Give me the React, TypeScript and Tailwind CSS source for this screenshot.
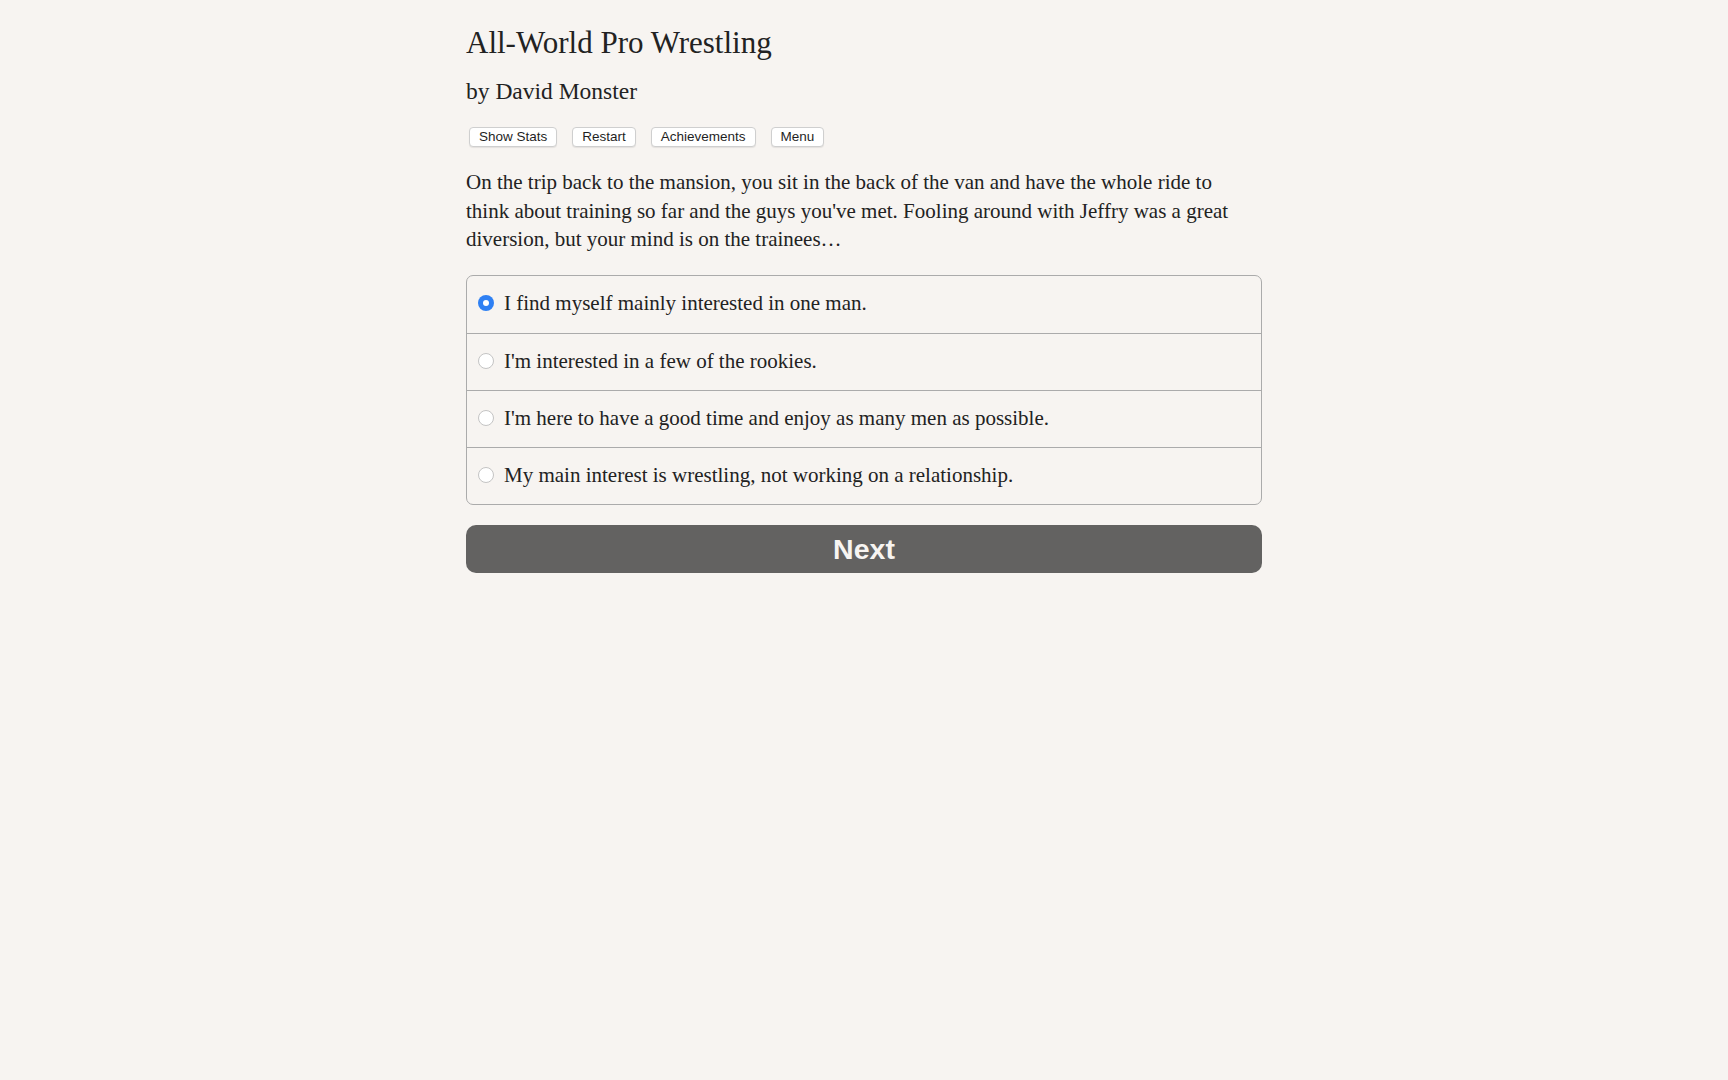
import { useState } from 'react';

const options = [
  'I find myself mainly interested in one man.',
  "I'm interested in a few of the rookies.",
  "I'm here to have a good time and enjoy as many men as possible.",
  'My main interest is wrestling, not working on a relationship.',
];

const navButtons = ['Show Stats', 'Restart', 'Achievements', 'Menu'];

export default function App() {
  const [selected, setSelected] = useState(0);

  return (
    <div className="min-h-screen bg-[#f7f4f1] text-[#222222] font-['Liberation_Serif',serif]">
      <main className="mx-auto w-[796px] pt-[25px]">
        <h1 className="text-[31px] leading-[36px] font-normal">All-World Pro Wrestling</h1>
        <h2 className="mt-[15px] text-[23.5px] leading-[30px] font-normal">by David Monster</h2>

        {/* top bar */}
        <div className="mt-[21px] flex gap-[15px] pl-[3px] font-['Liberation_Sans',sans-serif]">
          {navButtons.map((b) => (
            <button
              key={b}
              className="rounded-[4px] border border-[#cfcfcf] bg-white px-[9px] text-[13.5px] leading-[18px] text-[#1f1f1f] shadow-[0_1px_1px_rgba(0,0,0,0.08)]"
            >
              {b}
            </button>
          ))}
        </div>

        <p className="mt-[21px] text-[21px] leading-[28.7px]">
          On the trip back to the mansion, you sit in the back of the van and have the whole ride to
          <br />
          think about training so far and the guys you've met. Fooling around with Jeffry was a great
          <br />
          diversion, but your mind is on the trainees…
        </p>

        {/* choices */}
        <div className="mt-[21px] overflow-hidden rounded-[7px] border border-[#ababab]">
          {options.map((o, i) => (
            <label
              key={o}
              onClick={() => setSelected(i)}
              className="flex h-[57px] cursor-pointer items-center gap-[10px] border-t border-[#ababab] pb-[3px] pl-[11px] first:border-t-0"
            >
              {selected === i ? (
                <span className="flex h-4 w-4 shrink-0 items-center justify-center rounded-full bg-[#2f80f3]">
                  <span className="h-[6px] w-[6px] rounded-full bg-white" />
                </span>
              ) : (
                <span className="h-4 w-4 shrink-0 rounded-full border border-[#c4c4c4] bg-white" />
              )}
              <span className="text-[21px] leading-[28px]">{o}</span>
            </label>
          ))}
        </div>

        <button className="mt-[20px] h-[48px] w-full rounded-[10px] bg-[#636261] font-['Liberation_Sans',sans-serif] text-[28.5px] font-bold text-[#f7f4f1]">
          Next
        </button>
      </main>
    </div>
  );
}
